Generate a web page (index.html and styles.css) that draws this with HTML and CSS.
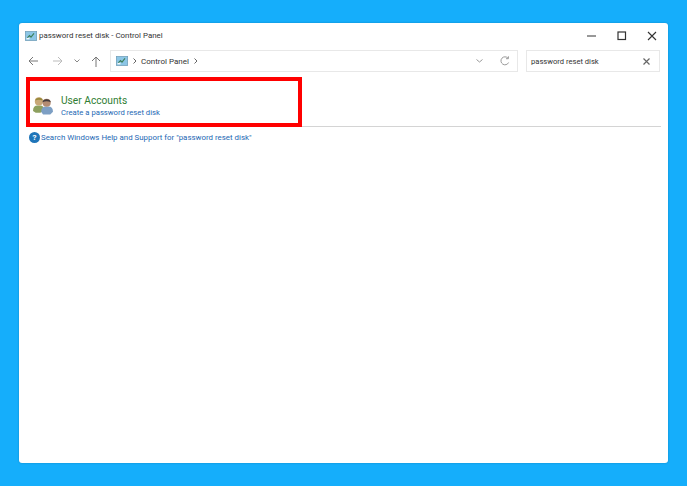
FILE: index.html
```html
<!DOCTYPE html>
<html lang="en">
<head>
<meta charset="UTF-8">
<title>password reset disk - Control Panel</title>
<link rel="stylesheet" href="styles.css">
</head>
<body>
    <div class="window">
        <!-- Title bar -->
        <div class="titlebar">
            <svg class="cp-icon" width="12" height="10" viewBox="0 0 16 13">
                <rect x="0.5" y="0.5" width="15" height="12" fill="#8cc6e6" stroke="#6f9db8"/>
                <path d="M3 9l3-3 2 2 4-5" fill="none" stroke="#3d7f5a" stroke-width="1.5"/>
                <rect x="2" y="9" width="4" height="2" fill="#f4f8fa"/>
            </svg>
            <span class="title-text">password reset disk - Control Panel</span>
            <div class="caption">
                <svg width="10" height="10" viewBox="0 0 10 10"><path d="M0 5h9" stroke="#333" fill="none"/></svg>
                <svg width="10" height="10" viewBox="0 0 10 10"><rect x="1" y="1" width="7.5" height="7.5" stroke="#333" stroke-width="1.2" fill="none"/></svg>
                <svg width="10" height="10" viewBox="0 0 10 10"><path d="M1 1l8 8M9 1l-8 8" stroke="#333" stroke-width="1.1" fill="none"/></svg>
            </div>
        </div>

        <!-- Nav bar -->
        <div class="navbar">
            <div class="nav-buttons">
                <svg width="11" height="10" viewBox="0 0 11 10"><path d="M10 5H1M5 1L1 5l4 4" stroke="#777" fill="none"/></svg>
                <svg class="nav-forward" width="11" height="10" viewBox="0 0 11 10"><path d="M1 5h9M6 1l4 4-4 4" stroke="#bbb" fill="none"/></svg>
                <svg width="6" height="4" viewBox="0 0 6 4"><path d="M0.5 0.5L3 3l2.500-2.500" stroke="#888" fill="none"/></svg>
                <svg width="10" height="11" viewBox="0 0 10 11"><path d="M5 11V1M1 5l4-4 4 4" stroke="#777" fill="none"/></svg>
            </div>
            <div class="address">
                <svg class="cp-icon" width="12" height="10" viewBox="0 0 16 13">
                    <rect x="0.5" y="0.5" width="15" height="12" fill="#8cc6e6" stroke="#6f9db8"/>
                    <path d="M3 9l3-3 2 2 4-5" fill="none" stroke="#3d7f5a" stroke-width="1.5"/>
                    <rect x="2" y="9" width="4" height="2" fill="#f4f8fa"/>
                </svg>
                <svg class="crumb-sep" width="4" height="6" viewBox="0 0 4 6"><path d="M0.5 0.5L3 3 0.5 5.500" stroke="#666" fill="none"/></svg>
                <span class="crumb">Control Panel</span>
                <svg class="crumb-sep" width="4" height="6" viewBox="0 0 4 6"><path d="M0.5 0.5L3 3 0.5 5.500" stroke="#666" fill="none"/></svg>
                <svg class="addr-chevron" width="7" height="4" viewBox="0 0 7 4"><path d="M0.5 0.5L3.500 3l3-2.500" stroke="#999" fill="none"/></svg>
                <svg class="addr-refresh" width="10" height="10" viewBox="0 0 10 10"><path d="M8.600 6.500A4 4 0 1 1 8 2.200M8.400 0.3v2.400H6" stroke="#999" fill="none"/></svg>
            </div>
            <div class="search">
                <span class="search-text">password reset disk</span>
                <svg width="7" height="7" viewBox="0 0 7 7"><path d="M0.5 0.5l6 6M6.500 0.5l-6 6" stroke="#666" stroke-width="1.2" fill="none"/></svg>
            </div>
        </div>

        <!-- Results -->
        <div class="content">
            <div class="result-row">
                <div class="result">
                    <svg class="users-icon" width="20" height="19" viewBox="0 0 22 20">
                        <path d="M0 16c0-4 2-6 5-6h3c3 0 4 2 4 6l-4 2H3z" fill="#8da05f"/>
                        <circle cx="6.500" cy="5.500" r="4.500" fill="#c8a878"/>
                        <path d="M2.500 4.500C3 1 10 0 10.700 4.500 8 3.500 5 3.500 2.500 4.500z" fill="#9a8a3c"/>
                        <path d="M9 17c0-4 2-6 5-6h3c3 0 5 2 5 6l-3 3h-8z" fill="#7d9fc4"/>
                        <circle cx="15" cy="7" r="4.500" fill="#b48c72"/>
                        <path d="M10.500 6.500C10.500 2 19.500 2 19.500 6.500 17 5 13 5 10.500 6.500z" fill="#41393a"/>
                    </svg>
                    <div class="result-text">
                        <a class="result-title">User Accounts</a>
                        <a class="result-link">Create a password reset disk</a>
                    </div>
                </div>
            </div>
            <div class="help-row">
                <span class="help-icon">?</span>
                <a class="help-link">Search Windows Help and Support for "password reset disk"</a>
            </div>
        </div>
    </div>
</body>
</html>
```

FILE: styles.css
```css
html, body {
    height: 100%;
}

body {
    margin: 0;
    padding: 23px 19px;
    box-sizing: border-box;
    background-color: #15aefb;
    font-family: Roboto, "Open Sans", sans-serif;
    overflow: hidden;
}

.window {
    width: 649px;
    height: 440px;
    background-color: #fff;
    border-radius: 3px;
    box-shadow: 0 0 2px rgba(0, 0, 0, 0.25);
    display: flex;
    flex-direction: column;
}

.titlebar {
    height: 19px;
    padding: 3px 0 5px 6px;
    display: flex;
    align-items: center;
    gap: 2px;
}

.title-text {
    font-size: 7.9px;
    color: #333;
    flex: 1;
}

.caption {
    display: flex;
    gap: 20px;
    padding-right: 11px;
}

.navbar {
    height: 22px;
    padding: 0 0 2px 9px;
    display: flex;
    align-items: center;
}

.nav-buttons {
    width: 82px;
    display: flex;
    align-items: center;
    gap: 11px;
}

.nav-forward {
    margin-left: 2px;
}

.address {
    width: 408px;
    height: 22px;
    border: 1px solid #e8e8e8;
    display: flex;
    align-items: center;
    box-sizing: border-box;
    padding-left: 5px;
    font-size: 8px;
    color: #333;
}

.crumb-sep {
    margin: 0 7px 0 5px;
}

.crumb {
    margin-left: -3px;
}

.addr-chevron {
    margin-left: auto;
}

.addr-refresh {
    margin: 0 7px 0 17px;
}

.search {
    width: 134px;
    height: 22px;
    margin-left: 8px;
    border: 1px solid #e8e8e8;
    box-sizing: border-box;
    display: flex;
    align-items: center;
    justify-content: space-between;
    padding: 0 9px 0 4px;
    font-size: 7.6px;
    color: #333;
}

.content {
    flex: 1;
    padding: 3px 7px 0 7px;
}

.result-row {
    height: 50px;
    border-bottom: 1px solid #d4d4d4;
    box-sizing: border-box;
}

.result {
    width: 276px;
    height: 50px;
    border: 4px solid #f00;
    box-sizing: border-box;
    display: flex;
    align-items: center;
    gap: 8px;
    padding: 7px 0 0 3px;
}

.result-text {
    display: flex;
    flex-direction: column;
}

.result-title {
    font-size: 10.2px;
    line-height: 13px;
    color: #2f7d32;
}

.result-link {
    font-size: 7.7px;
    line-height: 11px;
    color: #2468b4;
}

.help-row {
    display: flex;
    align-items: center;
    gap: 1px;
    padding: 5px 0 0 3px;
}

.help-icon {
    width: 11px;
    height: 11px;
    border-radius: 50%;
    background-color: #1f75b9;
    color: #fff;
    font-size: 8px;
    font-weight: bold;
    line-height: 11px;
    text-align: center;
}

.help-link {
    font-size: 7.9px;
    color: #2468b4;
}
```
